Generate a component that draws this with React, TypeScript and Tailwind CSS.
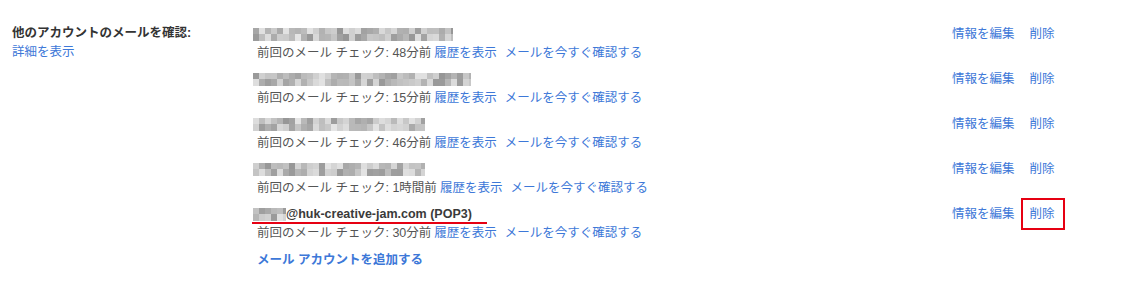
import React from "react";

type Account = { blur: number; email?: string; ago: string; marked?: boolean };

const accounts: Account[] = [
  { blur: 200, ago: "48分前" },
  { blur: 218, ago: "15分前" },
  { blur: 172, ago: "46分前" },
  { blur: 172, ago: "1時間前" },
  { blur: 33, email: "@huk-creative-jam.com (POP3)", ago: "30分前", marked: true },
];

// pseudo-random greys for the pixelated (hidden) address
function shades(seed: number, n: number) {
  const out: string[] = [];
  let s = seed * 9301 + 49297;
  for (let i = 0; i < n; i++) {
    s = (s * 9301 + 49297) % 233280;
    const v = 150 + Math.floor((s / 233280) * 80);
    out.push(`rgb(${v},${v},${v})`);
  }
  return out;
}

function Mosaic({ width, seed }: { width: number; seed: number }) {
  const cols = Math.ceil(width / 6);
  const top = shades(seed, cols);
  const bottom = shades(seed + 7, cols);
  return (
    <span className="inline-flex h-[13px] flex-col overflow-hidden align-middle" style={{ width }}>
      <span className="flex h-[6px]">
        {top.map((c, i) => (
          <span key={i} className="h-[6px] w-[6px] shrink-0" style={{ background: c }} />
        ))}
      </span>
      <span className="flex h-[7px]">
        {bottom.map((c, i) => (
          <span key={i} className="h-[7px] w-[6px] shrink-0" style={{ background: c }} />
        ))}
      </span>
    </span>
  );
}

function Row({ a, i }: { a: Account; i: number }) {
  return (
    <div className="flex">
      <div className="flex-1 pl-[253px]">
        <div className="relative flex h-[20px] items-center">
          <Mosaic width={a.blur} seed={i + 3} />
          {a.email && <span className="font-bold text-[#3a3a3a]">{a.email}</span>}
          {a.marked && <span className="absolute left-[-1px] top-[18px] h-[2px] w-[235px] bg-[#e60012]" />}
        </div>
        <div className="flex h-[19px] items-center pl-[4px] text-[#555]">
          前回のメール チェック: {a.ago}
          <span className="ml-[3px] text-[#3d78d8]">履歴を表示</span>
          <span className="ml-[8px] text-[#3d78d8]">メールを今すぐ確認する</span>
        </div>
      </div>
      <div className="flex h-[20px] w-[172px] items-center text-[#3d78d8]">
        <span>情報を編集</span>
        <span className="relative ml-[15px]">
          削除
          {a.marked && (
            <span className="absolute bottom-[-6px] left-[-9px] right-[-10px] top-[-7px] border-2 border-[#e60012]" />
          )}
        </span>
      </div>
    </div>
  );
}

export default function App() {
  return (
    <div
      className="relative h-[288px] w-[1124px] bg-white pt-[24px] text-[12.5px] leading-[19px]"
      style={{ fontFamily: '"Liberation Sans", "Noto Sans CJK JP", sans-serif' }}
    >
      <div className="absolute left-[12px] top-[24px]">
        <div className="font-bold text-[#333]">他のアカウントのメールを確認:</div>
        <div className="text-[#3d78d8]">詳細を表示</div>
      </div>
      <div className="flex flex-col gap-[6px]">
        {accounts.map((a, i) => (
          <Row key={i} a={a} i={i} />
        ))}
      </div>
      <div className="mt-[8px] pl-[257px] font-bold text-[#3d78d8]">メール アカウントを追加する</div>
    </div>
  );
}
